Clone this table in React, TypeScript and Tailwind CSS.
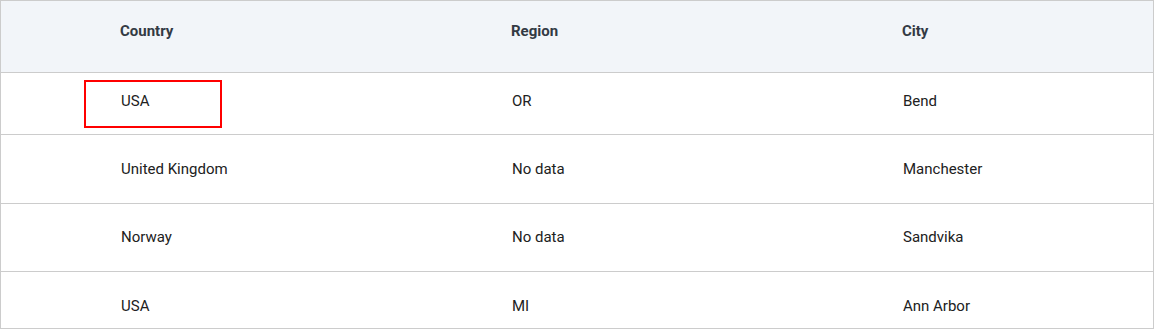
import React from "react";

const rows = [
  { c: "USA", r: "OR", city: "Bend", h: "h-[62px] pt-[19px]" },
  { c: "United Kingdom", r: "No data", city: "Manchester", h: "h-[69px] pt-[25px]" },
  { c: "Norway", r: "No data", city: "Sandvika", h: "h-[68px] pt-[24px]" },
  { c: "USA", r: "MI", city: "Ann Arbor", h: "h-[69px] pt-[25px]" },
];

export default function App() {
  return (
    <div className="w-[1154px] h-[329px] bg-white border border-[#cccccc] font-['Roboto',sans-serif] text-[15px] leading-[18px] overflow-hidden">
      <div className="grid grid-cols-[119px_391px_391px_1fr] h-[72px] pt-[21px] bg-[#f2f5f9] border-b border-[#cccccc] font-bold text-[#333a44]">
        <div />
        <div>Country</div>
        <div>Region</div>
        <div>City</div>
      </div>
      {rows.map((row, i) => (
        <div
          key={i}
          className={`relative grid grid-cols-[119px_391px_391px_1fr] border-b border-[#cccccc] text-[#212121] ${row.h}`}
        >
          <div />
          <div className="pl-px">{row.c}</div>
          <div className="pl-px">{row.r}</div>
          <div className="pl-px">{row.city}</div>
          {i === 0 && (
            <div className="absolute left-[83px] top-[7px] w-[138px] h-[48px] border-2 border-[#ff0000]" />
          )}
        </div>
      ))}
    </div>
  );
}
